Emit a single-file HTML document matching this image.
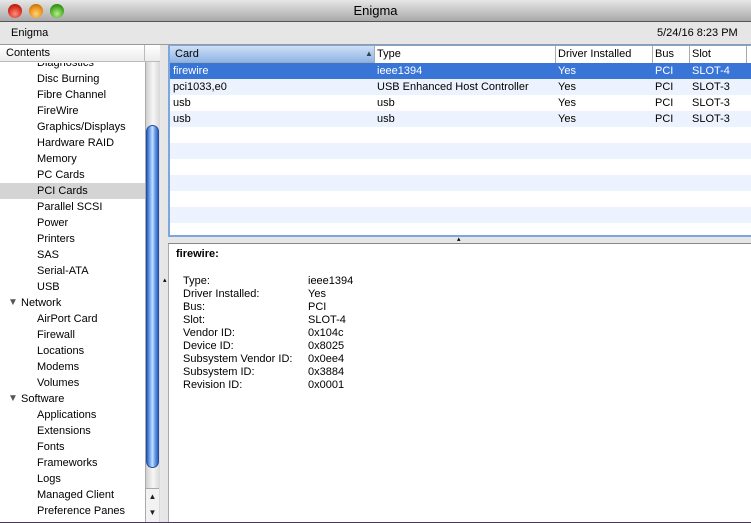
<!DOCTYPE html>
<html><head><style>
*{margin:0;padding:0;box-sizing:border-box}
body{width:751px;height:523px;overflow:hidden;position:relative;font-family:"Liberation Sans",sans-serif;font-size:11px;color:#000;background:#e8e8e8}
.a{position:absolute;white-space:nowrap}
#title{left:0;top:0;width:751px;height:22px;background:linear-gradient(#e6e6e6,#a9a9a9);border-bottom:1px solid #555;text-align:center;font-size:13px;line-height:22px}
.btn{position:absolute;top:4px;width:14px;height:14px;border-radius:50%}
#tool{left:0;top:22px;width:751px;height:23px;background:#e6e6e6;border-bottom:1px solid #999}
#side{left:0;top:45px;width:160px;height:477px;background:#fff;border-right:1px solid #aaa}
.hdr{background:linear-gradient(#fff,#ececec);border-bottom:1px solid #bbb;height:17px;line-height:16px}
.it{position:absolute;left:37px;height:16px;line-height:16px}
#sb{left:145px;top:62px;width:15px;height:460px;background:linear-gradient(90deg,#d0d0d0,#f6f6f6 50%,#d8d8d8);border-left:1px solid #aaa}
#thumb{left:146px;top:125px;width:13px;height:343px;border-radius:7px;background:linear-gradient(90deg,#2a5fc4,#8fbdf5 35%,#c8e0fb 50%,#6fa3ea 70%,#2b5fc0);border:1px solid #234f9e}
#tbl{left:168px;top:45px;width:583px;height:192px;background:#fff;border:2px solid #7aa7de;border-top:1px solid #7aa7de;border-right:none}
.row{position:absolute;left:0;width:583px;height:16px;line-height:16px}
.c{position:absolute}
#split{left:168px;top:237px;width:583px;height:7px;background:#e6e6e6;border-bottom:1px solid #888}
#det{left:168px;top:244px;width:583px;height:278px;background:#fff;border-left:1px solid #aaa}
</style></head><body>
<div class="a" id="title">Enigma
<div class="btn" style="left:8px;background:radial-gradient(circle at 50% 70%,#ff8f7c,#d42a1b 60%,#8a1208)"></div>
<div class="btn" style="left:29px;background:radial-gradient(circle at 50% 70%,#ffd47a,#e68a12 60%,#9a5606)"></div>
<div class="btn" style="left:50px;background:radial-gradient(circle at 50% 70%,#b4f08a,#45a522 60%,#246a0c)"></div>
</div>
<div class="a" id="tool"><span class="a" style="left:11px;top:5px">Enigma</span><span class="a" style="left:657px;top:5px">5/24/16 8:23 PM</span></div>
<div class="a" id="side">
<div class="a" style="left:0;top:18px;width:145px;height:459px;overflow:hidden">
<div class="it" style="top:-8px">Diagnostics</div>
<div class="it" style="top:8px">Disc Burning</div>
<div class="it" style="top:24px">Fibre Channel</div>
<div class="it" style="top:40px">FireWire</div>
<div class="it" style="top:56px">Graphics/Displays</div>
<div class="it" style="top:72px">Hardware RAID</div>
<div class="it" style="top:88px">Memory</div>
<div class="it" style="top:104px">PC Cards</div>
<div class="a" style="left:0;top:120px;width:145px;height:16px;background:#d4d4d4"></div>
<div class="it" style="top:120px">PCI Cards</div>
<div class="it" style="top:136px">Parallel SCSI</div>
<div class="it" style="top:152px">Power</div>
<div class="it" style="top:168px">Printers</div>
<div class="it" style="top:184px">SAS</div>
<div class="it" style="top:200px">Serial-ATA</div>
<div class="it" style="top:216px">USB</div>
<div class="it" style="top:232px;left:21px"><span style="position:absolute;left:-13px;font-size:10px;color:#555">▼</span>Network</div>
<div class="it" style="top:248px">AirPort Card</div>
<div class="it" style="top:264px">Firewall</div>
<div class="it" style="top:280px">Locations</div>
<div class="it" style="top:296px">Modems</div>
<div class="it" style="top:312px">Volumes</div>
<div class="it" style="top:328px;left:21px"><span style="position:absolute;left:-13px;font-size:10px;color:#555">▼</span>Software</div>
<div class="it" style="top:344px">Applications</div>
<div class="it" style="top:360px">Extensions</div>
<div class="it" style="top:376px">Fonts</div>
<div class="it" style="top:392px">Frameworks</div>
<div class="it" style="top:408px">Logs</div>
<div class="it" style="top:424px">Managed Client</div>
<div class="it" style="top:440px">Preference Panes</div>
</div>
<div class="a hdr" style="left:0;top:0;width:160px"><span style="padding-left:6px">Contents</span><div class="a" style="left:144px;top:0;height:17px;border-left:1px solid #bbb"></div></div>
</div>
<div class="a" id="sb"></div>
<div class="a" id="thumb"></div>
<div class="a" style="left:146px;top:488px;width:13px;height:34px;background:#f2f2f2;border-top:1px solid #aaa;font-size:8px;text-align:center;line-height:16px;color:#222">▲<br>▼</div>
<div class="a" style="left:161px;top:45px;width:7px;height:477px;background:#e6e6e6"></div>
<div class="a" id="tbl">
<div class="hdr a" style="left:0;top:0;width:583px;background:linear-gradient(#cfe0f6,#8fb4e6);border-bottom:1px solid #9ab">
<span class="c" style="left:5px">Card</span><span class="c" style="left:195px;font-size:8px;color:#345">▲</span>
<span class="c" style="left:204px;height:17px;border-left:1px solid #aaa;background:#fff;width:380px"></span>
<span class="c" style="left:207px">Type</span>
<span class="c" style="left:385px;height:17px;border-left:1px solid #aaa"></span><span class="c" style="left:388px">Driver Installed</span>
<span class="c" style="left:482px;height:17px;border-left:1px solid #aaa"></span><span class="c" style="left:485px">Bus</span>
<span class="c" style="left:519px;height:17px;border-left:1px solid #aaa"></span><span class="c" style="left:522px">Slot</span>
<span class="c" style="left:576px;height:17px;border-left:1px solid #aaa"></span>
</div>
<div class="row" style="top:17px;background:#3875d7;color:#fff"><span class="c" style="left:3px">firewire</span><span class="c" style="left:207px">ieee1394</span><span class="c" style="left:388px">Yes</span><span class="c" style="left:485px">PCI</span><span class="c" style="left:522px">SLOT-4</span></div>
<div class="row" style="top:33px;background:#edf3fe"><span class="c" style="left:3px">pci1033,e0</span><span class="c" style="left:207px">USB Enhanced Host Controller</span><span class="c" style="left:388px">Yes</span><span class="c" style="left:485px">PCI</span><span class="c" style="left:522px">SLOT-3</span></div>
<div class="row" style="top:49px"><span class="c" style="left:3px">usb</span><span class="c" style="left:207px">usb</span><span class="c" style="left:388px">Yes</span><span class="c" style="left:485px">PCI</span><span class="c" style="left:522px">SLOT-3</span></div>
<div class="row" style="top:65px;background:#edf3fe"><span class="c" style="left:3px">usb</span><span class="c" style="left:207px">usb</span><span class="c" style="left:388px">Yes</span><span class="c" style="left:485px">PCI</span><span class="c" style="left:522px">SLOT-3</span></div>
<div class="row" style="top:97px;background:#edf3fe"></div>
<div class="row" style="top:129px;background:#edf3fe"></div>
<div class="row" style="top:161px;background:#edf3fe"></div>
</div>
<div class="a" id="split"><span class="a" style="left:289px;top:-2px;font-size:7px">▴</span></div>
<div class="a" id="det">
<span class="a" style="left:7px;top:4px;font-weight:bold">firewire:</span>
<span class="a" style="left:-6px;top:32px;font-size:7px">▴</span>
<div class="a" style="left:14px;top:31px;line-height:13px">Type:<br>Driver Installed:<br>Bus:<br>Slot:<br>Vendor ID:<br>Device ID:<br>Subsystem Vendor ID:<br>Subsystem ID:<br>Revision ID:</div>
<div class="a" style="left:139px;top:31px;line-height:13px">ieee1394<br>Yes<br>PCI<br>SLOT-4<br>0x104c<br>0x8025<br>0x0ee4<br>0x3884<br>0x0001</div>
</div>
<div class="a" style="left:0;top:522px;width:751px;height:1px;background:#4a3a5a"></div>
</body></html>
